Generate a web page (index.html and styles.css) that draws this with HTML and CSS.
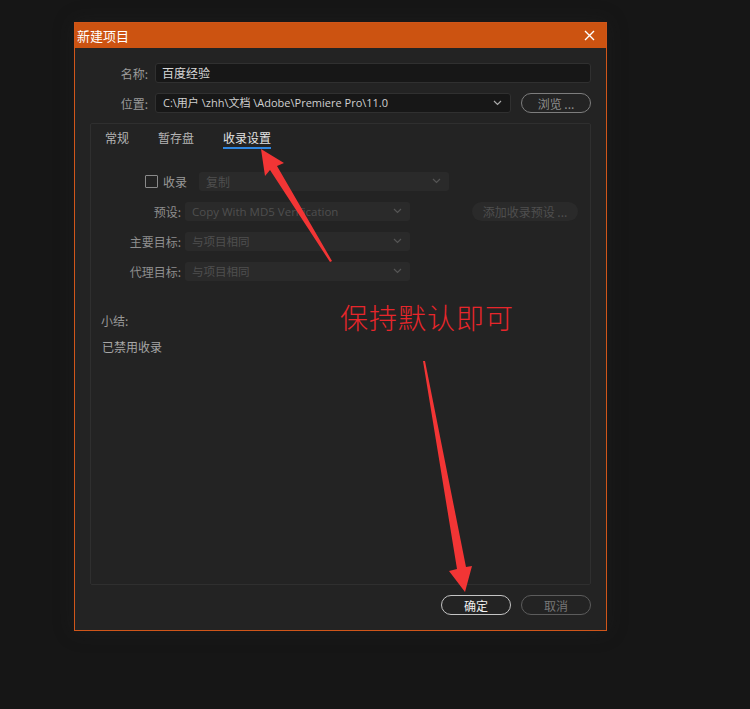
FILE: index.html
```html
<!DOCTYPE html>
<html lang="zh">
<head>
<meta charset="utf-8">
<title>新建项目</title>
<link rel="stylesheet" href="styles.css">
</head>
<body>
<div class="dialog">
  <div class="titlebar">
    <span class="title">新建项目</span>
    <svg class="close" width="11" height="11" viewBox="0 0 11 11"><path d="M1 1L10 10M10 1L1 10" stroke="#fff" stroke-width="1.4"/></svg>
  </div>
  <div class="body">
    <div class="row">
      <span class="label">名称:</span>
      <div class="input name">百度经验</div>
    </div>
    <div class="row">
      <span class="label">位置:</span>
      <div class="input select path"><span class="path-text">C:\用户 \zhh\文档 \Adobe\Premiere Pro\11.0</span><svg class="chev" width="9" height="6" viewBox="0 0 9 6"><path d="M1 1L4.5 4.5L8 1" fill="none" stroke="#aaa" stroke-width="1.2"/></svg></div>
      <div class="btn browse">浏览 ...</div>
    </div>
    <div class="panel">
      <div class="tabs">
        <span class="tab">常规</span>
        <span class="tab">暂存盘</span>
        <span class="tab active">收录设置</span>
      </div>
      <div class="form">
        <div class="frow first">
          <span class="check"></span>
          <span class="clabel">收录</span>
          <div class="dsel wide">复制<svg class="chev" width="9" height="6" viewBox="0 0 9 6"><path d="M1 1L4.5 4.5L8 1" fill="none" stroke="#555" stroke-width="1.2"/></svg></div>
        </div>
        <div class="frow">
          <span class="flabel">预设:</span>
          <div class="dsel">Copy With MD5 Verification<svg class="chev" width="9" height="6" viewBox="0 0 9 6"><path d="M1 1L4.5 4.5L8 1" fill="none" stroke="#555" stroke-width="1.2"/></svg></div>
          <div class="dbtn">添加收录预设 ...</div>
        </div>
        <div class="frow">
          <span class="flabel">主要目标:</span>
          <div class="dsel">与项目相同<svg class="chev" width="9" height="6" viewBox="0 0 9 6"><path d="M1 1L4.5 4.5L8 1" fill="none" stroke="#555" stroke-width="1.2"/></svg></div>
        </div>
        <div class="frow">
          <span class="flabel">代理目标:</span>
          <div class="dsel">与项目相同<svg class="chev" width="9" height="6" viewBox="0 0 9 6"><path d="M1 1L4.5 4.5L8 1" fill="none" stroke="#555" stroke-width="1.2"/></svg></div>
        </div>
      </div>
      <div class="summary">
        <p class="sum-title">小结:</p>
        <p class="sum-text">已禁用收录</p>
      </div>
    </div>
    <div class="actions">
      <div class="btn ok">确定</div>
      <div class="btn cancel">取消</div>
    </div>
  </div>
</div>
<div class="note">保持默认即可</div>
<svg class="arrows" width="750" height="709" viewBox="0 0 750 709">
  <polygon fill="#f23535" points="261,149 284,163 277,166 332,261 330,262 270,170 265,176"/>
  <polygon fill="#f23535" points="423,361 425,361 466,567 472,566 465,592 449,571 457,569"/>
</svg>
</body>
</html>
```

FILE: styles.css
```css
* { box-sizing: border-box; }
html, body { margin: 0; padding: 0; }
body {
  background: #161616;
  width: 750px;
  height: 709px;
  position: relative;
  overflow: hidden;
  font-family: "Noto Sans CJK SC", "Open Sans", sans-serif;
  font-size: 12px;
  color: #a0a0a0;
  padding-top: 22px;
  padding-left: 74px;
}
.dialog {
  width: 533px;
  border: 1px solid #d0561a;
  background: #232323;
  box-shadow: 0 0 18px rgba(40,40,40,0.35);
}
.titlebar {
  height: 25px;
  background: #cc5311;
  display: flex;
  align-items: center;
  justify-content: space-between;
  padding: 0 11px 0 2px;
}
.title { color: #fff; font-size: 13px; }
.close { display: block; }
.body { padding: 15px 15px 15px 15px; }
.row {
  display: flex;
  align-items: center;
  height: 20px;
  margin-bottom: 10px;
}
.label {
  width: 60px;
  text-align: right;
  padding-right: 2px;
  color: #9a9a9a;
  font-size: 12px;
  margin-right: 5px;
}
.input {
  height: 20px;
  background: #171717;
  border: 1px solid #303030;
  border-radius: 3px;
  color: #d8d8d8;
  padding: 0 6px;
  line-height: 18px;
  font-size: 12px;
}
.name { flex: 1; }
.select { display: flex; align-items: center; justify-content: space-between; }
.path { width: 356px; font-family: "Open Sans", "Noto Sans CJK SC", sans-serif; font-size: 11px; padding-right: 8px; padding-left: 7px; color: #d0d0d0; }
.path-text { white-space: pre; }
.chev { display: block; flex: none; }
.btn {
  height: 20px;
  border-radius: 10px;
  display: flex;
  align-items: center;
  justify-content: center;
  width: 70px;
  font-size: 12px;
}
.browse { margin-left: 10px; border: 1.5px solid #7d7d7d; color: #8e8e8e; }
.panel {
  height: 462px;
  border: 1px solid #2f2f2f;
  border-radius: 2px;
  background: #232323;
}
.tabs {
  display: flex;
  gap: 29px;
  padding: 5px 0 0 14px;
  height: 28px;
}
.tab { color: #b4b4b4; line-height: 18px; height: 20px; }
.tab.active { color: #e4e4e4; border-bottom: 2px solid #2f86e0; height: 20px; }
.form { padding-top: 19px; }
.frow {
  display: flex;
  align-items: center;
  height: 20px;
  margin-bottom: 10px;
}
.frow.first { padding-left: 54px; }
.check {
  width: 13px; height: 13px;
  border: 1.5px solid #8a8a8a;
  border-radius: 1px;
  margin-right: 5px;
}
.clabel { color: #9a9a9a; margin-right: 12px; }
.flabel { width: 90px; text-align: right; color: #8e8e8e; margin-right: 4px; }
.dsel {
  width: 225px;
  height: 19px;
  background: #2a2a2a;
  border-radius: 3px;
  color: #4f4f4f;
  display: flex;
  align-items: center;
  justify-content: space-between;
  padding: 0 8px 0 7px;
  font-family: "Open Sans", "Noto Sans CJK SC", sans-serif;
  font-size: 11.5px;
}
.dsel.wide { width: 250px; font-family: "Noto Sans CJK SC", sans-serif; font-size: 12px; }
.dbtn {
  margin-left: 62px;
  width: 106px;
  height: 19px;
  border-radius: 10px;
  background: #2a2a2a;
  color: #4f4f4f;
  display: flex;
  align-items: center;
  justify-content: center;
}
.summary { padding: 21px 0 0 10px; }
.summary p { margin: 0; }
.sum-title { color: #989898; line-height: 18px; }
.sum-text { color: #a6a6a6; margin-top: 8px !important; line-height: 18px; padding-left: 1px; }
.actions {
  display: flex;
  justify-content: flex-end;
  gap: 10px;
  margin-top: 10px;
}
.ok { border: 1.5px solid #c4c4c4; color: #f0f0f0; }
.cancel { border: 1.5px solid #5c5c5c; color: #777; }
.note {
  position: absolute;
  left: 340px;
  top: 297px;
  font-size: 28px;
  color: #e8262b;
  font-family: "Noto Sans CJK SC", sans-serif;
  font-weight: 300;
  letter-spacing: 1px;
  line-height: 40px;
}
.arrows { position: absolute; left: 0; top: 0; pointer-events: none; }
```
